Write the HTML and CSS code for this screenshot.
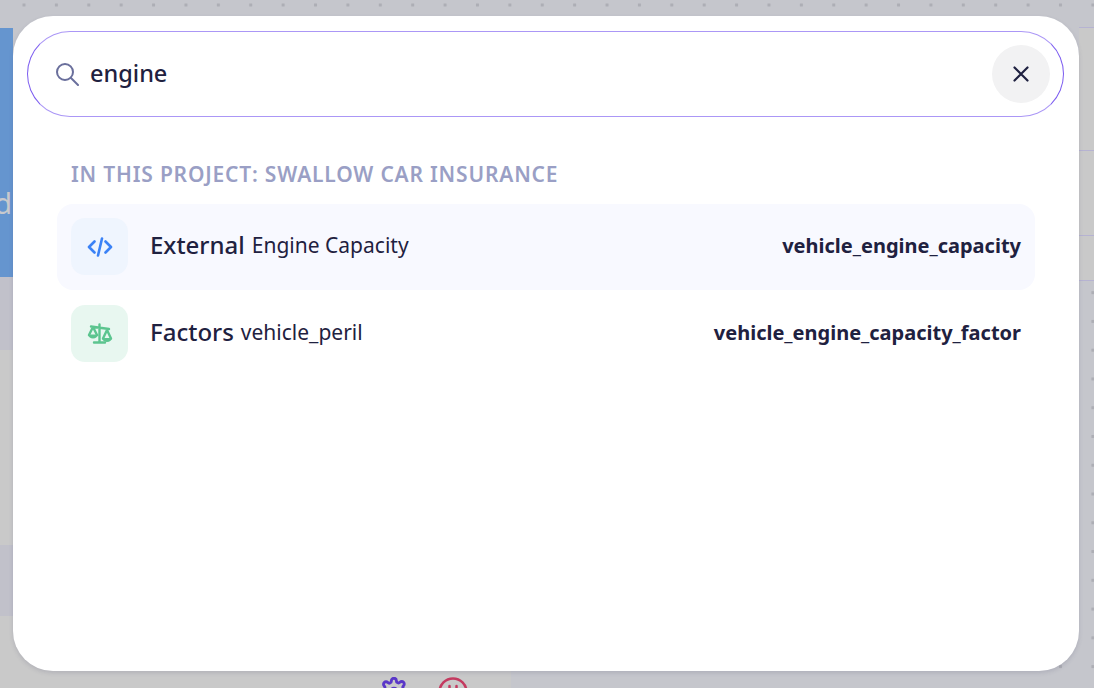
FILE: index.html
```html
<!DOCTYPE html>
<html lang="en">
<head>
<meta charset="utf-8">
<title>Search</title>
<link rel="stylesheet" href="styles.css">
</head>
<body>
<div class="backdrop">
  <div class="bg-blue"><span class="bg-blue-letter">d</span></div>
  <div class="bg-band bg-band-a"></div>
  <div class="bg-band bg-band-b"></div>
  <div class="bg-band bg-band-c"></div>
  <div class="bg-band bg-band-d"></div>
  <div class="bg-bottom"></div>
  <div class="bg-right"></div>
  <div class="bg-line bg-line-a"></div>
  <div class="bg-line bg-line-b"></div>
  <div class="bg-line bg-line-c"></div>
  <div class="bg-line bg-line-d"></div>
  <svg class="bg-icon bg-gear" viewBox="0 0 24 24"><circle cx="12" cy="12" r="3"/><path d="M19.400 15a1.650 1.650 0 0 0 .33 1.820l.06.06a2 2 0 1 1-2.830 2.830l-.06-.06a1.650 1.650 0 0 0-2.820 1.170V21a2 2 0 1 1-4 0v-.09a1.650 1.650 0 0 0-2.830-1.160l-.06.06a2 2 0 1 1-2.830-2.830l.06-.06a1.650 1.650 0 0 0-1.170-2.820H3a2 2 0 1 1 0-4h.09a1.650 1.650 0 0 0 1.160-2.830l-.06-.06a2 2 0 1 1 2.830-2.830l.06.06a1.650 1.650 0 0 0 2.820-1.170V3a2 2 0 1 1 4 0v.09a1.650 1.650 0 0 0 2.830 1.160l.06-.06a2 2 0 1 1 2.830 2.830l-.06.06a1.650 1.650 0 0 0 1.170 2.820H21a2 2 0 1 1 0 4h-.09a1.650 1.650 0 0 0-1.510 1z"/></svg>
  <svg class="bg-icon bg-face" viewBox="0 0 30 30"><circle cx="15" cy="15" r="13.500"/><path d="M11.500 9v2.500M18.500 9v2.500"/></svg>
</div>
<main class="modal">
  <div class="search">
    <svg class="search-icon" viewBox="0 0 24 24"><circle cx="10" cy="10" r="8"/><path d="M16 16l7 7"/></svg>
    <span class="search-text">engine</span>
    <button class="close" type="button" aria-label="Close">
      <svg viewBox="0 0 16 16"><path d="M1.500 1.500l13 13M14.500 1.500l-13 13"/></svg>
    </button>
  </div>
  <section class="results">
    <h2 class="section-title">In this project: Swallow Car Insurance</h2>
    <div class="row row-active">
      <span class="tile tile-blue">
        <svg viewBox="0 0 26 20"><path d="M7.500 4.500L2 10l5.500 5.500M18.500 4.500L24 10l-5.500 5.500M15 1.500L11 18.500"/></svg>
      </span>
      <span class="row-title">External</span>
      <span class="row-sub">Engine Capacity</span>
      <span class="row-key">vehicle_engine_capacity</span>
    </div>
    <div class="row">
      <span class="tile tile-green">
        <svg viewBox="0 0 26 22"><path class="scale-line" d="M4 3.500L22 6M12.500 1.500V19.500M7 19.500h11M6 4L2 12M6 4l4 8M20 7l-4 8.500M20 7l4 8.500"/><path class="scale-fill" d="M1 11.500h10a5 4 0 0 1-10 0zM15 15h10a5 4 0 0 1-10 0z"/></svg>
      </span>
      <span class="row-title">Factors</span>
      <span class="row-sub">vehicle_peril</span>
      <span class="row-key">vehicle_engine_capacity_factor</span>
    </div>
  </section>
</main>
</body>
</html>
```
FILE: styles.css
```css
* { box-sizing: border-box; }
html, body { margin: 0; height: 100%; overflow: hidden; }
body {
  background: #c5c6cc;
  font-family: "Noto Sans", "Open Sans", sans-serif;
  color: #1f2140;
  position: relative;
}
.backdrop {
  position: absolute;
  inset: 0;
  overflow: hidden;
  background-color: #c5c6cc;
  background-image: radial-gradient(circle, #adaeb5 1.5px, transparent 2px);
  background-size: 32.400px 28.780px;
  background-position: 7.800px -9.400px;
}
.bg-blue {
  position: absolute; left: 0; top: 28px; width: 13px; height: 249px;
  background: #6595cf; overflow: hidden;
}
.bg-blue-letter {
  position: absolute; right: 1px; top: 156px; font-size: 29px; line-height: 38px; color: #c8c9cd;
}
.bg-band { position: absolute; left: 0; width: 13px; background: #c9c9c9; }
.bg-band-a { top: 277px; height: 73px; background: #c1c1ca; }
.bg-band-b { top: 350px; height: 195px; }
.bg-band-c { top: 545px; height: 71px; background: #c1c1ca; }
.bg-band-d { top: 616px; height: 72px; }
.bg-bottom { position: absolute; left: 0; top: 630px; width: 511px; height: 58px; background: #c9c9c9; }
.bg-right { position: absolute; left: 1079px; top: 28px; width: 15px; height: 252px; background: #c9c9c9; }
.bg-line { position: absolute; left: 1079px; width: 15px; height: 1px; background: #b6b3d2; }
.bg-line-a { top: 27px; }
.bg-line-b { top: 150px; }
.bg-line-c { top: 235px; }
.bg-line-d { top: 280px; }
.bg-icon { position: absolute; width: 30px; height: 30px; fill: none; stroke-linecap: round; stroke-linejoin: round; }
.bg-gear { left: 379px; top: 677px; stroke: #5a37c8; stroke-width: 2.300; }
.bg-face { left: 438px; top: 677px; stroke: #c43a60; stroke-width: 2.500; }

.modal {
  position: absolute;
  left: 13px; top: 16px;
  width: 1066px; height: 655px;
  background: #fff;
  border-radius: 40px;
  padding: 15px 15px 0 14px;
  box-shadow: 0 2px 4px rgba(80, 80, 110, .18);
}
.search {
  height: 86px;
  border: 1px solid #7c5cf0;
  border-top-color: #ab97f6;
  border-bottom-color: #ab97f6;
  border-radius: 43px;
  display: flex;
  align-items: center;
  padding: 0 13px 0 27px;
}
.search-icon {
  width: 24px; height: 24px; fill: none; stroke: #6a6f9c; stroke-width: 2; stroke-linecap: round; flex: none;
}
.search-text { margin: 0 0 2px 11px; font-size: 23.500px; font-weight: 500; color: #1f2140; }
.close {
  margin-left: auto;
  width: 58px; height: 58px;
  border: 0; border-radius: 50%;
  background: #f2f2f3;
  display: flex; align-items: center; justify-content: center;
  padding: 0;
}
.close svg { width: 16px; height: 16px; fill: none; stroke: #1f2140; stroke-width: 2.200; stroke-linecap: round; }
.results {
  padding: 40px 30px 0 30px;
  margin-right: -1px;
  display: flex;
  flex-direction: column;
  gap: 1.400px;
}
.section-title {
  margin: 0 0 11.600px;
  padding-left: 14px;
  font-size: 21px; line-height: 34px; font-weight: 600;
  letter-spacing: .8px;
  text-transform: uppercase;
  color: #9a9fc5;
}
.row {
  height: 85.600px;
  border-radius: 16px;
  display: flex;
  align-items: center;
  padding: 0 14px;
}
.row-active { background: #f8f9ff; }
.tile {
  width: 57px; height: 57px; border-radius: 14px; flex: none;
  display: flex; align-items: center; justify-content: center;
  margin-right: 22px;
}
.tile-blue { background: #eff5fe; }
.tile-green { background: #e8f7f0; }
.tile-blue svg { width: 26px; height: 20px; fill: none; stroke: #3b82f6; stroke-width: 2.600; stroke-linecap: round; stroke-linejoin: round; }
.tile-green svg { width: 26px; height: 22px; }
.scale-line { fill: none; stroke: #5cc58f; stroke-width: 2.400; stroke-linecap: round; stroke-linejoin: round; }
.scale-fill { fill: #5cc58f; }
.row-title { font-size: 24px; font-weight: 500; margin: 0 7px 5px 0; }
.row-sub { font-size: 21px; margin-bottom: 3px; }
.row-key { margin: 0 0 2px auto; font-size: 20px; font-weight: 700; }
```
